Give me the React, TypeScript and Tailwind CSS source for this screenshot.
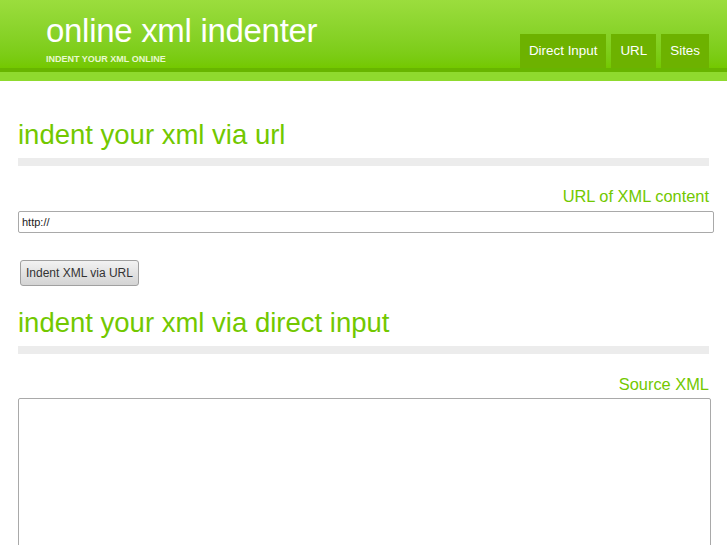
import React from 'react';

const App: React.FC = () => {
  const tabs = ["Direct Input", "URL", "Sites"];

  return (
    <div className="min-h-screen bg-white font-['Liberation_Sans',Arial,sans-serif]">
      <header>
        <div className="h-[68px] bg-gradient-to-b from-[#9bdd3d] to-[#74c800] flex justify-between pl-[46px] pr-[18px]">
          <div className="pt-[12px]">
            <h1 className="text-[33px] leading-[38px] text-white tracking-[-0.3px]">online xml indenter</h1>
            <p className="text-[9px] font-bold text-[#e8f8d0] uppercase mt-[3px]">Indent your xml online</p>
          </div>
          <nav className="flex items-end gap-[5px]">
            {tabs.map((tab, index) => (
              <a
                key={index}
                className="h-[34px] px-[9px] bg-[#6db200] text-white text-[13.4px] flex items-center"
              >
                {tab}
              </a>
            ))}
          </nav>
        </div>
        <div className="h-[4px] bg-[#68b500]"></div>
        <div className="h-[9px] bg-[#8fda2e]"></div>
      </header>

      <main className="px-[18px] pt-[38px]">
        <section>
          <h2 className="text-[27.5px] leading-[32px] text-[#72c800]">indent your xml via url</h2>
          <div className="h-[8px] bg-[#ececec] mt-[7px] w-[691px]"></div>
          <label className="block text-right w-[691px] text-[16.4px] text-[#72c800] mt-[18px]">URL of XML content</label>
          <input
            type="text"
            defaultValue="http://"
            className="block w-[696px] h-[22px] mt-[2px] border border-[#a9a9a9] rounded-[2px] px-[3px] text-[11px] text-[#222]"
          />
          <button className="mt-[27px] ml-[2px] h-[26px] px-[5px] text-[12px] text-[#333] border border-[#a0a0a0] rounded-[3px] bg-gradient-to-b from-[#f2f2f2] to-[#d4d4d4]">
            Indent XML via URL
          </button>
        </section>

        <section className="mt-[21px]">
          <h2 className="text-[27.5px] leading-[32px] text-[#72c800]">indent your xml via direct input</h2>
          <div className="h-[8px] bg-[#ececec] mt-[7px] w-[691px]"></div>
          <label className="block text-right w-[691px] text-[16.4px] text-[#72c800] mt-[18px]">Source XML</label>
          <textarea className="block w-[693px] h-[200px] mt-[2px] border border-[#a9a9a9] rounded-[2px] resize-none"></textarea>
        </section>
      </main>
    </div>
  );
};

export default App;
